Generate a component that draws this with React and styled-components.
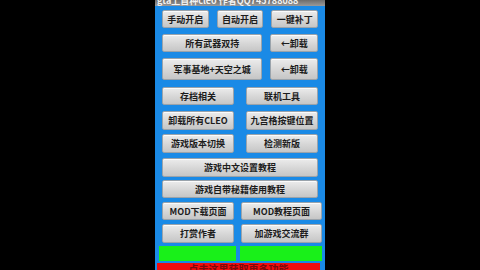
import React from "react";
import styled, { createGlobalStyle } from "styled-components";

const Global = createGlobalStyle`
  html, body { margin: 0; padding: 0; background: #000; }
  body { width: 480px; height: 270px; overflow: hidden; font-family: "Noto Sans CJK SC", "Liberation Sans", sans-serif; }
`;

const Stage = styled.div`
  width: 480px;
  height: 270px;
  background: #000;
  display: flex;
  justify-content: center;
  overflow: hidden;
`;

const Phone = styled.div`
  width: 170px;
  height: 270px;
  display: flex;
  flex-direction: column;
  background: #1a8ae6;
  overflow: hidden;
`;

const TitleBar = styled.div`
  height: 6px;
  flex: none;
  background: linear-gradient(#6d6d6d, #9a9a9a);
  overflow: hidden;
  padding-left: 2px;
  color: #f2f2f2;
  font-size: 9px;
  line-height: 9px;
  font-weight: bold;
  white-space: nowrap;
`;

const TitleText = styled.div`
  margin-top: -4px;
`;

const Body = styled.div`
  flex: 1;
  display: flex;
  flex-direction: column;
  padding: 4px 7px 0 7px;
`;

const Row = styled.div`
  display: flex;
  gap: ${(p) => p.$gap ?? 8}px;
  margin-top: ${(p) => p.$mt ?? 0}px;
  height: ${(p) => p.$h ?? 18}px;
  margin-left: ${(p) => p.$ml ?? 0}px;
  margin-right: ${(p) => p.$mr ?? 0}px;
`;

const Btn = styled.div`
  flex: ${(p) => p.$flex ?? 1};
  width: ${(p) => (p.$w ? p.$w + "px" : "auto")};
  display: flex;
  align-items: center;
  justify-content: center;
  background: linear-gradient(#ececec, #d6d6d6 55%, #c6c6c6);
  border: 1px solid #9aa3ab;
  border-radius: 2px;
  box-sizing: border-box;
  color: #1c1c1c;
  font-size: 9px;
  font-weight: bold;
  white-space: nowrap;
  box-shadow: inset 0 1px 0 rgba(255,255,255,0.8);
`;

const Green = styled.div`
  flex: ${(p) => p.$flex ?? 1};
  background: #19f019;
`;

const RedBar = styled.div`
  margin-top: 2px;
  margin-left: -5px;
  margin-right: -2px;
  height: 12px;
  background: #f20d0d;
  color: #7a0a0a;
  font-size: 10px;
  font-weight: bold;
  display: flex;
  justify-content: center;
  line-height: 12px;
`;

export default function App() {
  return (
    <>
      <Global />
      <Stage>
        <Phone>
          <TitleBar>
            <TitleText>gta上首种cleo 作者QQ745788088</TitleText>
          </TitleBar>
          <Body>
            <Row $mt={0} $h={18}>
              <Btn>手动开启</Btn>
              <Btn>自动开启</Btn>
              <Btn>一键补丁</Btn>
            </Row>
            <Row $mt={6} $h={18}>
              <Btn $flex={101}>所有武器双持</Btn>
              <Btn $flex={47}>←卸载</Btn>
            </Row>
            <Row $mt={6} $h={22}>
              <Btn $flex={101}>军事基地+天空之城</Btn>
              <Btn $flex={47}>←卸载</Btn>
            </Row>
            <Row $mt={7} $h={18} $gap={12}>
              <Btn>存档相关</Btn>
              <Btn>联机工具</Btn>
            </Row>
            <Row $mt={6} $h={19} $gap={12}>
              <Btn>卸载所有CLEO</Btn>
              <Btn>九宫格按键位置</Btn>
            </Row>
            <Row $mt={4} $h={19} $gap={12}>
              <Btn>游戏版本切换</Btn>
              <Btn>检测新版</Btn>
            </Row>
            <Row $mt={5} $h={19}>
              <Btn>游戏中文设置教程</Btn>
            </Row>
            <Row $mt={3} $h={18}>
              <Btn>游戏自带秘籍使用教程</Btn>
            </Row>
            <Row $mt={4} $h={18} $gap={7} $mr={-4}>
              <Btn $flex={72}>MOD下载页面</Btn>
              <Btn $flex={81}>MOD教程页面</Btn>
            </Row>
            <Row $mt={4} $h={19} $gap={7} $mr={-4}>
              <Btn $flex={72}>打赏作者</Btn>
              <Btn $flex={81}>加游戏交流群</Btn>
            </Row>
            <Row $mt={3} $h={15} $gap={4} $ml={-3} $mr={-4}>
              <Green $flex={77} />
              <Green $flex={82} />
            </Row>
            <RedBar>点击这里获取更多功能</RedBar>
          </Body>
        </Phone>
      </Stage>
    </>
  );
}
